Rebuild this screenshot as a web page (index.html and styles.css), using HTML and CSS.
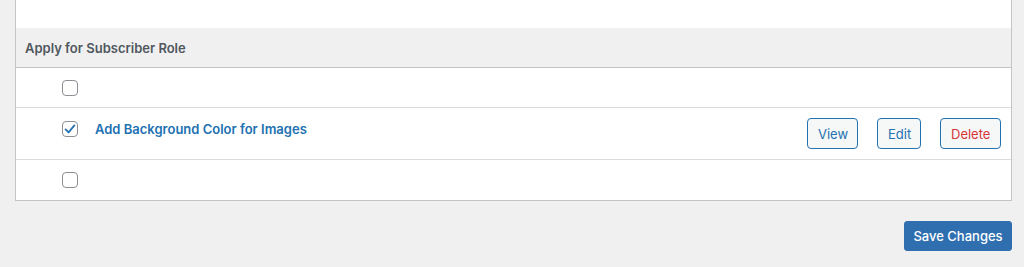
FILE: index.html
```html
<!doctype html>
<html lang="en">
  <head>
    <meta charset="UTF-8" />
    <meta name="viewport" content="width=device-width, initial-scale=1.0" />
    <title>Snippets</title>
    <link rel="stylesheet" href="styles.css">
  </head>
  <body>
    <div class="wrap">
      <div class="table">
        <div class="top"></div>
        <div class="head">Apply for Subscriber Role</div>
        <div class="row">
          <span class="check"></span>
        </div>
        <div class="row item">
          <span class="check checked">
            <svg viewBox="0 0 16 16" width="16" height="16"><path d="M3.6 8.4 L6.6 11.3 L12.4 4.4" fill="none" stroke="#2271b1" stroke-width="1.8" stroke-linecap="round" stroke-linejoin="round"/></svg>
          </span>
          <a class="title" href="#">Add Background Color for Images</a>
          <div class="actions">
            <button class="btn view">View</button>
            <button class="btn edit">Edit</button>
            <button class="btn delete">Delete</button>
          </div>
        </div>
        <div class="row last">
          <span class="check"></span>
        </div>
      </div>
      <div class="submit">
        <button class="save">Save Changes</button>
      </div>
    </div>
  </body>
</html>
```

FILE: styles.css
```css
* {
  box-sizing: border-box;
}
body {
  margin: 0;
  background: #f0f0f1;
  font-family: Inter, "Noto Sans", sans-serif;
  font-size: 13px;
  color: #3c434a;
}
.wrap {
  padding: 0 12px 0 15px;
}
.table {
  background: #fff;
  border: 1px solid #c3c4c7;
  border-top: none;
}
.top {
  height: 28px;
}
.head {
  height: 40px;
  background: #f0f0f1;
  border-bottom: 1px solid #c3c4c7;
  padding: 0 9px;
  display: flex;
  align-items: center;
  font-weight: 600;
  font-size: 13px;
  color: #50575e;
}
.row {
  height: 40px;
  border-bottom: 1px solid #dcdcde;
  display: flex;
  align-items: center;
  padding-left: 46px;
}
.row.last {
  border-bottom: none;
}
.row.item {
  height: 52px;
  align-items: flex-start;
  padding-top: 10px;
  padding-right: 10px;
}
.check {
  width: 16px;
  height: 16px;
  border: 1px solid #8c8f94;
  border-radius: 4px;
  background: #fff;
  flex: none;
  display: flex;
}
.check svg {
  margin: -1px;
}
.item .check {
  margin-top: 3px;
}
.title {
  margin-left: 17px;
  margin-top: 2px;
  color: #2271b1;
  font-weight: 600;
  text-decoration: none;
  line-height: 18px;
}
.actions {
  margin-left: auto;
  display: flex;
  gap: 19px;
}
.btn {
  height: 31px;
  padding: 0 10px;
  background: #f6f7f7;
  border: 1px solid #2271b1;
  border-radius: 4px;
  color: #2271b1;
  font-family: inherit;
  font-size: 13px;
}
.view {
  width: 51px;
}
.edit {
  width: 44px;
}
.delete {
  width: 61px;
  color: #d63638;
}
.submit {
  display: flex;
  justify-content: flex-end;
  padding-top: 20px;
}
.save {
  width: 108px;
  height: 30px;
  background: #2f6fb0;
  border: 1px solid #2f6fb0;
  border-radius: 3px;
  color: #fff;
  font-family: inherit;
  font-size: 13px;
  font-weight: 500;
}
```
